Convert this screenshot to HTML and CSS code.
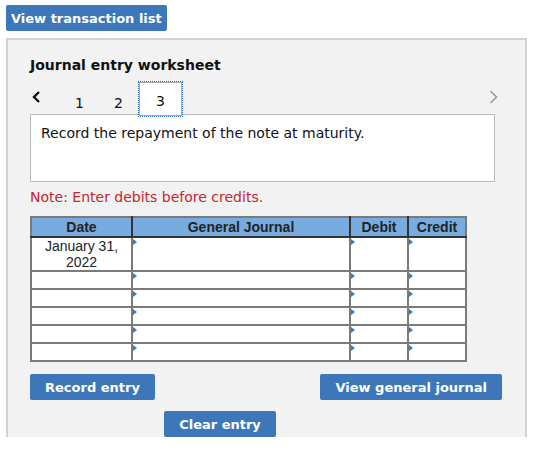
FILE: index.html
```html
<!DOCTYPE html>
<html lang="en">
<head>
    <meta charset="UTF-8">
    <title>Journal entry worksheet</title>
    <link rel="stylesheet" href="styles.css">
</head>
<body>
    <button class="btn top-btn">View transaction list</button>

    <div class="panel">
        <h2 class="title">Journal entry worksheet</h2>

        <div class="tabs">
            <span class="arrow prev">
                <svg width="9" height="12" viewBox="0 0 9 12"><polyline points="7,1 2,6 7,11" fill="none" stroke="#111" stroke-width="2.4"/></svg>
            </span>
            <span class="tab">1</span>
            <span class="tab">2</span>
            <span class="tab active">3</span>
            <span class="arrow next">
                <svg width="9" height="14" viewBox="0 0 9 14"><polyline points="1.5,1 7.5,7 1.5,13" fill="none" stroke="#999" stroke-width="1.6"/></svg>
            </span>
        </div>

        <div class="prompt">Record the repayment of the note at maturity.</div>

        <p class="note">Note: Enter debits before credits.</p>

        <table class="journal">
            <thead>
                <tr>
                    <th class="c-date">Date</th>
                    <th class="c-gj">General Journal</th>
                    <th class="c-num">Debit</th>
                    <th class="c-num">Credit</th>
                </tr>
            </thead>
            <tbody>
                <tr class="first">
                    <td class="date">January 31,<br>2022</td>
                    <td class="cell"></td>
                    <td class="cell"></td>
                    <td class="cell"></td>
                </tr>
                <tr><td></td><td class="cell"></td><td class="cell"></td><td class="cell"></td></tr>
                <tr><td></td><td class="cell"></td><td class="cell"></td><td class="cell"></td></tr>
                <tr><td></td><td class="cell"></td><td class="cell"></td><td class="cell"></td></tr>
                <tr><td></td><td class="cell"></td><td class="cell"></td><td class="cell"></td></tr>
                <tr><td></td><td class="cell"></td><td class="cell"></td><td class="cell"></td></tr>
            </tbody>
        </table>

        <div class="actions">
            <button class="btn">Record entry</button>
            <button class="btn">View general journal</button>
        </div>
        <div class="actions center">
            <button class="btn">Clear entry</button>
        </div>
    </div>
</body>
</html>
```

FILE: styles.css
```css
body {
    margin: 0;
    background: white;
    font-family: "DejaVu Sans", Verdana, sans-serif;
    color: #111;
}

.btn {
    background: #3d77ba;
    color: white;
    border: none;
    border-radius: 2px;
    font-family: "DejaVu Sans", Verdana, sans-serif;
    font-weight: bold;
    font-size: 13px;
    height: 26px;
    padding: 0 15px;
    white-space: nowrap;
    cursor: pointer;
}

.top-btn {
    display: block;
    margin: 5px 0 0 6px;
    padding: 0 5px;
}

.panel {
    margin: 7px 0 0 6px;
    width: 495px;
    height: 397px;
    overflow: hidden;
    background: #f2f2f2;
    border: 2px solid #d2d2d2;
    border-bottom: none;
    padding: 0 0 0 22px;
}

.title {
    font-size: 14px;
    font-weight: bold;
    margin: 17px 0 0;
    height: 18px;
}

.tabs {
    display: flex;
    align-items: center;
    height: 35px;
    margin-top: 7px;
    position: relative;
    z-index: 1;
}

.arrow {
    display: flex;
    align-items: center;
}

.prev {
    margin: 0 0 6px 2px;
    width: 28px;
}

.next {
    margin: 0 27px 6px auto;
}

.tab {
    width: 39px;
    text-align: center;
    font-size: 14px;
    padding-top: 6px;
}

.tab.active {
    align-self: flex-start;
    box-sizing: border-box;
    height: 34px;
    width: 43px;
    margin-left: 1px;
    line-height: 26px;
    background: white;
    border: 1px solid #a8a8a8;
    outline: 1px dotted #2a6fc9;
    outline-offset: 0;
    padding-top: 5px;
}

.prompt {
    margin-top: -3px;
    width: 443px;
    height: 56px;
    background: white;
    border: 1.5px solid #b9b9b9;
    padding: 10px 10px 0;
    font-size: 14px;
}

.note {
    color: #c1272d;
    font-size: 14px;
    margin: 4px 0 0;
    height: 23px;
    line-height: 23px;
}

.journal {
    margin-top: 7px;
    border-collapse: collapse;
    font-family: "Liberation Sans", Arial, sans-serif;
    font-size: 14px;
    border: 2px solid #7a7a7a;
    background: white;
}

.journal th {
    background: #78ace0;
    border: 2px solid #333;
    border-top-color: #7a7a7a;
    height: 18px;
    padding: 0;
    font-size: 14px;
    color: #222;
}

.journal th:first-child {
    border-left-color: #7a7a7a;
}

.journal th:last-child {
    border-right-color: #7a7a7a;
}

.c-date { width: 99px; }
.c-gj { width: 216px; }
.c-num { width: 56px; }

.journal td {
    border: 2px solid #7a7a7a;
    border-top: 1px solid #7a7a7a;
    height: 16px;
    padding: 0;
    position: relative;
}

.journal tr.first td {
    height: 30px;
    border-top: none;
}

.journal td.date {
    text-align: center;
    vertical-align: top;
    line-height: 16px;
    color: #222;
}

.cell::before {
    content: "";
    position: absolute;
    left: 0;
    top: 1px;
    border-left: 4px solid #2f7ad8;
    border-top: 3px solid transparent;
    border-bottom: 3px solid transparent;
}

.actions {
    display: flex;
    justify-content: space-between;
    width: 472px;
    margin-top: 12px;
}

.actions:first-of-type .btn:first-child {
    width: 125px;
}

.actions.center {
    justify-content: flex-start;
    margin-top: 11px;
    padding-left: 134px;
}

.actions.center .btn {
    width: 112px;
}
```
